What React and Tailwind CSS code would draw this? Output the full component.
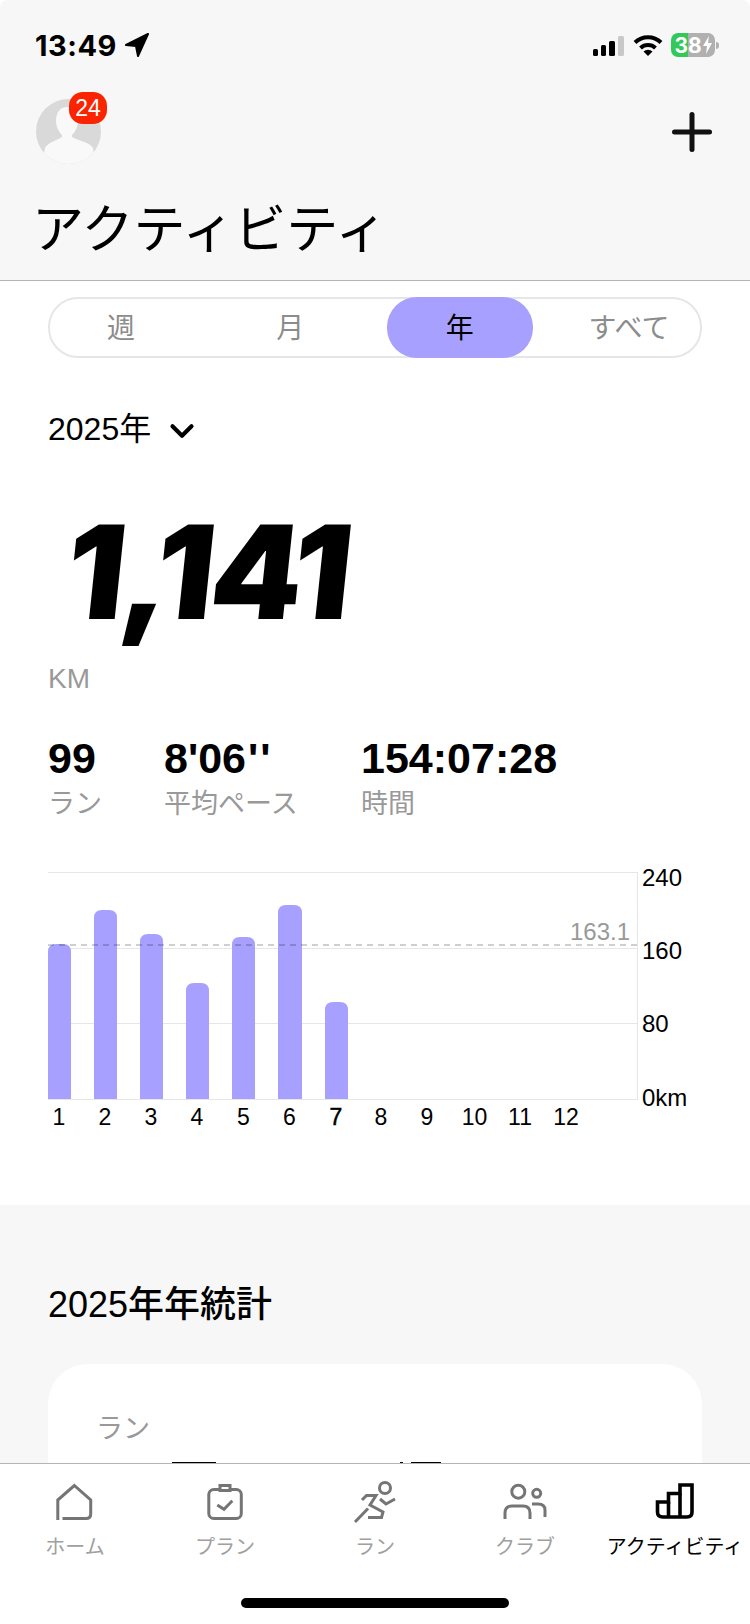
import { Plus, ChevronDown } from "lucide-react";

const tabs = ["週", "月", "年", "すべて"];

const stats = [
  { value: "99", label: "ラン", width: "w-[116px]" },
  {
    value: (
      <>
        8'06<span className="ml-[2px] tracking-[2px]">''</span>
      </>
    ),
    label: "平均ペース",
    width: "w-[197px]",
  },
  { value: "154:07:28", label: "時間", width: "" },
];

// x, width and top edge of each month bar, in page pixels
const bars = [
  [48, 23, 944],
  [94, 23, 910],
  [140, 23, 934],
  [186, 23, 983],
  [232, 23, 937],
  [278, 24, 905],
  [325, 23, 1002],
];

const months = [59, 105, 151, 197, 243.5, 289.5, 336, 381, 427, 474.5, 520, 566];

const axis = [
  ["240", 877],
  ["160", 950],
  ["80", 1023],
  ["0km", 1097],
];

function Chart() {
  const X = 40;
  const Y = 860;
  const base = 1099 - Y;
  return (
    <svg width="710" height="280" viewBox="0 0 710 280" className="block">
      {[872, 948, 1023, 1099].map((y) => (
        <line key={y} x1={48 - X} x2={638 - X} y1={y - Y + 0.5} y2={y - Y + 0.5} stroke="#e6e6e6" strokeWidth="1" />
      ))}
      <line x1={637.5 - X} x2={637.5 - X} y1={872 - Y} y2={base} stroke="#e6e6e6" strokeWidth="1" />
      {bars.map(([x, w, top]) => (
        <path
          key={x}
          d={`M${x - X} ${base}V${top - Y + 8}Q${x - X} ${top - Y} ${x - X + 8} ${top - Y}H${x - X + w - 8}Q${x - X + w} ${top - Y} ${x - X + w} ${top - Y + 8}V${base}Z`}
          fill="#a8a0ff"
        />
      ))}
      <line x1={48 - X} x2={638 - X} y1={945 - Y} y2={945 - Y} stroke="#000" strokeOpacity="0.25" strokeWidth="1.5" strokeDasharray="6 5" />
      <text x={630 - X} y={940 - Y} textAnchor="end" fontSize="24" fill="#999999">
        163.1
      </text>
      {axis.map(([label, y]) => (
        <text key={label} x={642 - X} y={y - Y + 9} fontSize="24" fill="#000">
          {label}
        </text>
      ))}
      {months.map((x, i) => (
        <text
          key={i}
          x={x - X}
          y={1125 - Y}
          textAnchor="middle"
          fontSize="23"
          fill="#000"
          stroke={i === 6 ? "#000" : "none"}
          strokeWidth="0.5"
        >
          {i + 1}
        </text>
      ))}
    </svg>
  );
}

function HomeIcon() {
  return (
    <svg width="60" height="50" viewBox="0 0 60 50" fill="none" stroke="#757575" strokeWidth="3">
      <path d="M12.8 45V25L29.3 10.5L45.7 25V39Q45.7 43.5 41 43.5H17.5" />
    </svg>
  );
}

function PlanIcon() {
  return (
    <svg width="60" height="50" viewBox="0 0 60 50" fill="none" stroke="#757575" strokeWidth="3">
      <rect x="13.8" y="14.5" width="32.5" height="29" rx="5" />
      <rect x="25" y="10.5" width="10" height="5" fill="#ffffff" />
      <path d="M22.3 30L29 34.3L37.3 25.7" />
    </svg>
  );
}

function RunIcon() {
  return (
    <svg width="60" height="50" viewBox="0 0 60 50" fill="none" stroke="#757575" strokeWidth="3">
      <circle cx="40" cy="13" r="5.5" />
      <path d="M17 25L21.5 20.5H31L25 30L38 37L36.5 42.5H23" />
      <path d="M10 47L23 33.5" />
      <path d="M35 24L41 29L50 24" />
    </svg>
  );
}

function ClubIcon() {
  return (
    <svg width="60" height="50" viewBox="0 0 60 50" fill="none" stroke="#757575" strokeWidth="3">
      <circle cx="23.3" cy="16.7" r="6.5" />
      <circle cx="41.7" cy="18.3" r="4" />
      <path d="M10 44V38Q10 31 17 31H28Q35 31 35 38V44" />
      <path d="M37 29H43Q50 29 50 35V42" />
    </svg>
  );
}

function ActivityIcon() {
  return (
    <svg width="60" height="50" viewBox="0 0 60 50" fill="none" stroke="#000" strokeWidth="3.6">
      <path d="M12.5 27H23.5V18.5H35V10H47V37Q47 42 42 42H18Q12.5 42 12.5 37Z" />
      <path d="M23.5 27V42M35 18.5V42" />
    </svg>
  );
}

const navItems = [
  { label: "ホーム", icon: <HomeIcon /> },
  { label: "プラン", icon: <PlanIcon /> },
  { label: "ラン", icon: <RunIcon /> },
  { label: "クラブ", icon: <ClubIcon /> },
  { label: "アクティビティ", icon: <ActivityIcon />, active: true },
];

function StatusBar() {
  return (
    <div className="flex h-[24px] items-center justify-between pl-[35px] pr-[31px]">
      <div className="flex items-center gap-[8px]">
        <span className="font-['Inter',sans-serif] text-[29px] font-bold leading-none tracking-[0.5px] text-black">13:49</span>
        <svg width="24" height="24" viewBox="0 0 24 24" fill="#000" stroke="#000" strokeWidth="2" strokeLinejoin="round">
          <path d="M23 1L1 12L11 13L13 23Z" />
        </svg>
      </div>
      <div className="flex items-center">
        <div className="flex h-[21px] items-end gap-[3px]">
          <div className="h-[7px] w-[5px] rounded-[1.5px] bg-black" />
          <div className="h-[11px] w-[5px] rounded-[1.5px] bg-black" />
          <div className="h-[15px] w-[6px] rounded-[1.5px] bg-black" />
          <div className="h-[20px] w-[6px] rounded-[1.5px] bg-[#c8c8c8]" />
        </div>
        <svg width="30" height="22" viewBox="0 0 30 22" fill="none" stroke="#000" strokeWidth="4" className="ml-[9px]">
          <path d="M2 8.5A18.5 18.5 0 0 1 28 8.5" />
          <path d="M7.5 14A11 11 0 0 1 22.5 14" />
          <path d="M15 22L10.5 17.5A6.5 6.5 0 0 1 19.5 17.5Z" fill="#000" stroke="none" />
        </svg>
        <div className="ml-[8px] flex h-[24px] w-[44px] items-center justify-center gap-[1px] rounded-[7px] bg-[linear-gradient(90deg,#34c759_0,#34c759_17px,#b0b0b0_17px,#b0b0b0_100%)] font-['Inter',sans-serif] text-[21px] font-bold leading-none text-white">
          <span>38</span>
          <svg width="9" height="18" viewBox="0 0 9 18" fill="#ffffff">
            <path d="M6 0L0 10H4L3 18L9 7H5Z" />
          </svg>
        </div>
        <div className="ml-[1px] h-[7px] w-[3px] rounded-r-full bg-[#b0b0b0]" />
      </div>
    </div>
  );
}

function Avatar() {
  return (
    <div className="relative h-[65px] w-[65px]">
      <svg width="65" height="65" viewBox="0 0 65 65">
        <defs>
          <clipPath id="avatarClip">
            <circle cx="32.5" cy="32.5" r="32.5" />
          </clipPath>
        </defs>
        <circle cx="32.5" cy="32.5" r="32.5" fill="#d9d9d9" />
        <path
          clipPath="url(#avatarClip)"
          d="M31 8C24 8 20 14 20 22C20 28 23 33 26 36V38C22 41 12 43 9 49L5 70H60L57 49C54 43 40 41 36 38V36C39 33 42 28 42 22C42 14 38 8 31 8Z"
          fill="#f9f9f9"
        />
      </svg>
      <div className="absolute left-[33px] top-[-7px] flex h-[32px] w-[38px] items-center justify-center rounded-[14px] bg-[#fa2400] text-[23px] leading-none text-white">
        24
      </div>
    </div>
  );
}

export default function App() {
  return (
    <div className="relative h-[1624px] w-[750px] overflow-hidden bg-white font-['Liberation_Sans','Noto_Sans_CJK_JP',sans-serif]">
      <header className="h-[281px] rounded-t-lg border-b border-[#b5b5b5] bg-[#f7f7f7] pt-[33px]">
        <StatusBar />
        <div className="mt-[42px] flex items-center justify-between pl-[36px] pr-[28px]">
          <Avatar />
          <Plus size={60} strokeWidth={2} color="#111111" />
        </div>
        <h1 className="mt-[36px] pl-[32px] text-[52px] font-normal leading-[60px] text-black">アクティビティ</h1>
      </header>

      <main>
        <div className="mx-[48px] mt-[16px] flex h-[61px] justify-between rounded-[30px] border-2 border-[#e6e6e6]">
          {tabs.map((tab, i) => (
            <div
              key={tab}
              className={
                i === 2
                  ? "-m-[2px] flex w-[146px] items-center justify-center rounded-[30px] bg-[#a8a0ff] pt-[2px] text-[28px] text-black"
                  : "-m-[2px] flex w-[146px] items-center justify-center pt-[2px] text-[28px] text-[#8c8c8c]"
              }
            >
              {tab}
            </div>
          ))}
        </div>

        <div className="ml-[48px] mt-[51px] flex h-[40px] items-center gap-[12px] text-[32px] text-black">
          <span>2025年</span>
          <ChevronDown size={38} strokeWidth={2.6} className="mt-[3px]" />
        </div>

        <div className="ml-[67px] mt-[57px] h-[156px] font-['Inter',sans-serif] text-[130px] font-black leading-[132px] text-black">
          <span className="inline-block -skew-x-6 tracking-[-3px]">1,141</span>
        </div>

        <div className="ml-[48px] text-[28px] leading-[34px] text-[#999999]">KM</div>

        <div className="ml-[48px] mt-[37px] flex">
          {stats.map((stat) => (
            <div key={stat.label} className={stat.width}>
              <div className="text-[43px] font-bold leading-[50px] text-black">{stat.value}</div>
              <div className="mt-[3px] text-[27px] leading-[36px] text-[#999999]">{stat.label}</div>
            </div>
          ))}
        </div>

        <div className="ml-[40px] mt-[38px]">
          <Chart />
        </div>

        <section className="mt-[65px] h-[600px] bg-[#f7f7f7] px-[48px] pt-[76px]">
          <h2 className="text-[36px] font-medium leading-[48px] text-black">2025年年統計</h2>
          <div className="mt-[35px] h-[300px] rounded-[40px] bg-white px-[48px] pt-[47px]">
            <div className="text-[27px] leading-[36px] text-[#999999]">ラン</div>
            <div className="relative mt-[15px] h-[4px]">
              <div className="absolute left-[76px] top-0 h-[4px] w-[44px] bg-black" />
              <div className="absolute left-[304px] top-0 h-[4px] w-[3px] bg-black" />
              <div className="absolute left-[315px] top-0 h-[4px] w-[30px] bg-black" />
            </div>
          </div>
        </section>
      </main>

      <nav className="absolute inset-x-0 bottom-0 h-[160px] bg-white">
        <div className="grid grid-cols-5 pt-[11px]">
          {navItems.map((item) => (
            <div key={item.label} className="flex flex-col items-center">
              {item.icon}
              <span
                className={
                  item.active
                    ? "mt-[9px] whitespace-nowrap text-[20px] leading-[26px] text-black"
                    : "mt-[9px] whitespace-nowrap text-[20px] leading-[26px] text-[#a0a0a0]"
                }
              >
                {item.label}
              </span>
            </div>
          ))}
        </div>
        <div className="absolute bottom-[16px] left-[241px] h-[10px] w-[268px] rounded-full bg-black" />
      </nav>
      <div className="absolute inset-x-0 bottom-[160px] h-px bg-[#b5b5b5]" />
    </div>
  );
}
